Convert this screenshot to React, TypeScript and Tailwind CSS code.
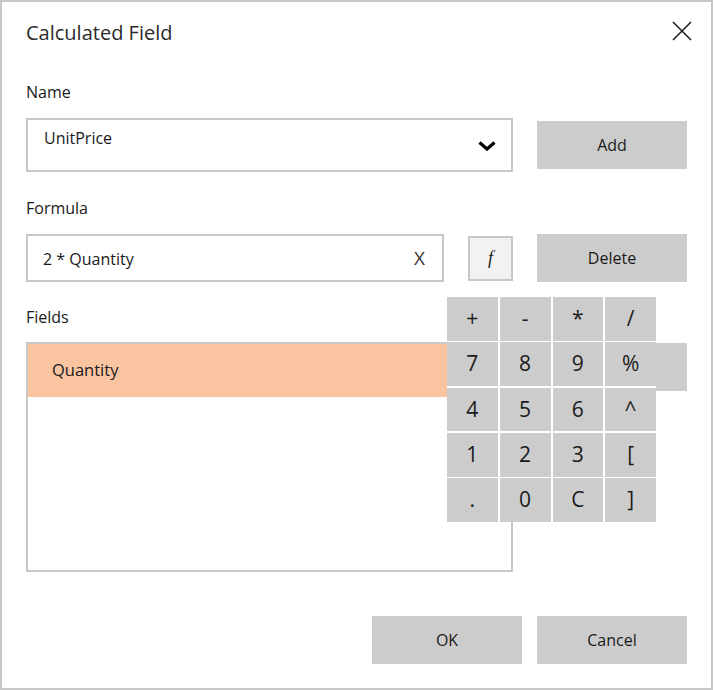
import React from "react";

const font = { fontFamily: '"Open Sans", "Noto Sans", sans-serif' };

const keys = ["+", "-", "*", "/", "7", "8", "9", "%", "4", "5", "6", "^", "1", "2", "3", "[", ".", "0", "C", "]"];

export default function App() {
  return (
    <div
      className="relative w-[713px] h-[690px] border-2 border-[#c8c8c8] bg-white text-[#1a1a1a] flex flex-col pl-[24px] pr-[24px]"
      style={font}
    >
      {/* title */}
      <div className="pt-[17px] flex items-start justify-between">
        <div className="text-[20px] leading-[28px] text-[#2b2b2b]">Calculated Field</div>
        <svg width="20" height="20" viewBox="0 0 20 20" className="mt-[2px] mr-[-5px]">
          <path d="M1 1 L19 19 M19 1 L1 19" stroke="#1a1a1a" strokeWidth="1.5" fill="none" />
        </svg>
      </div>

      {/* Name */}
      <div className="mt-[33px] text-[16px] leading-[24px]">Name</div>
      <div className="mt-[14px] flex items-center gap-[24px]">
        <div className="w-[487px] h-[54px] border-2 border-[#c8c8c8] flex justify-between pl-[16px] pr-[15px]">
          <div className="pt-[6px] text-[16px] leading-[24px]">UnitPrice</div>
          <svg width="18" height="10" viewBox="0 0 18 10" className="self-center mt-[2px]">
            <path d="M1.5 1.5 L9 8 L16.5 1.5" stroke="#000" strokeWidth="3.2" fill="none" />
          </svg>
        </div>
        <button className="w-[150px] h-[48px] bg-[#cccccc] text-[16px] text-[#1a1a1a]">Add</button>
      </div>

      {/* Formula */}
      <div className="mt-[24px] text-[16px] leading-[24px]">Formula</div>
      <div className="mt-[14px] flex items-center">
        <div className="w-[418px] h-[48px] border-2 border-[#c8c8c8] flex items-center justify-between pl-[15px] pr-[17px]">
          <div className="text-[16px] leading-[24px] mt-[2px]">2 * Quantity</div>
          <div className="text-[19px] leading-[24px] text-[#333]">X</div>
        </div>
        <button
          className="ml-[24px] w-[45px] h-[45px] border-2 border-[#c8c8c8] bg-[#f2f2f2] text-[18px] italic text-[#1a1a1a]"
          style={{ fontFamily: '"Liberation Serif", "DejaVu Serif", serif' }}
        >
          f
        </button>
        <button className="ml-[24px] w-[150px] h-[48px] bg-[#cccccc] text-[16px] text-[#1a1a1a]">Delete</button>
      </div>

      {/* Fields */}
      <div className="mt-[23px] text-[16px] leading-[24px]">Fields</div>
      <div className="mt-[13px] flex items-start gap-[24px]">
        <div className="w-[487px] h-[230px] border-2 border-[#c8c8c8]">
          <div className="h-[53px] bg-[#fbc4a1] flex items-center pl-[24px] text-[16.5px]">Quantity</div>
        </div>
        <button className="mt-[1px] w-[150px] h-[48px] bg-[#cccccc]"></button>
      </div>

      {/* bottom buttons */}
      <div className="mt-[44px] flex justify-end gap-[15px]">
        <button className="w-[150px] h-[48px] bg-[#cccccc] text-[16px] text-[#1a1a1a]">OK</button>
        <button className="w-[150px] h-[48px] bg-[#cccccc] text-[16px] text-[#1a1a1a]">Cancel</button>
      </div>

      {/* keypad popup */}
      <div className="absolute left-[445px] top-[295px] w-[209px] h-[225px] grid grid-cols-4 grid-rows-5 gap-x-[2px] gap-y-[1.5px] bg-white">
        {keys.map((k, i) => (
          <div key={i} className="bg-[#cccccc] flex items-center justify-center text-[21px] text-[#1a1a1a]">
            {k}
          </div>
        ))}
      </div>
    </div>
  );
}
